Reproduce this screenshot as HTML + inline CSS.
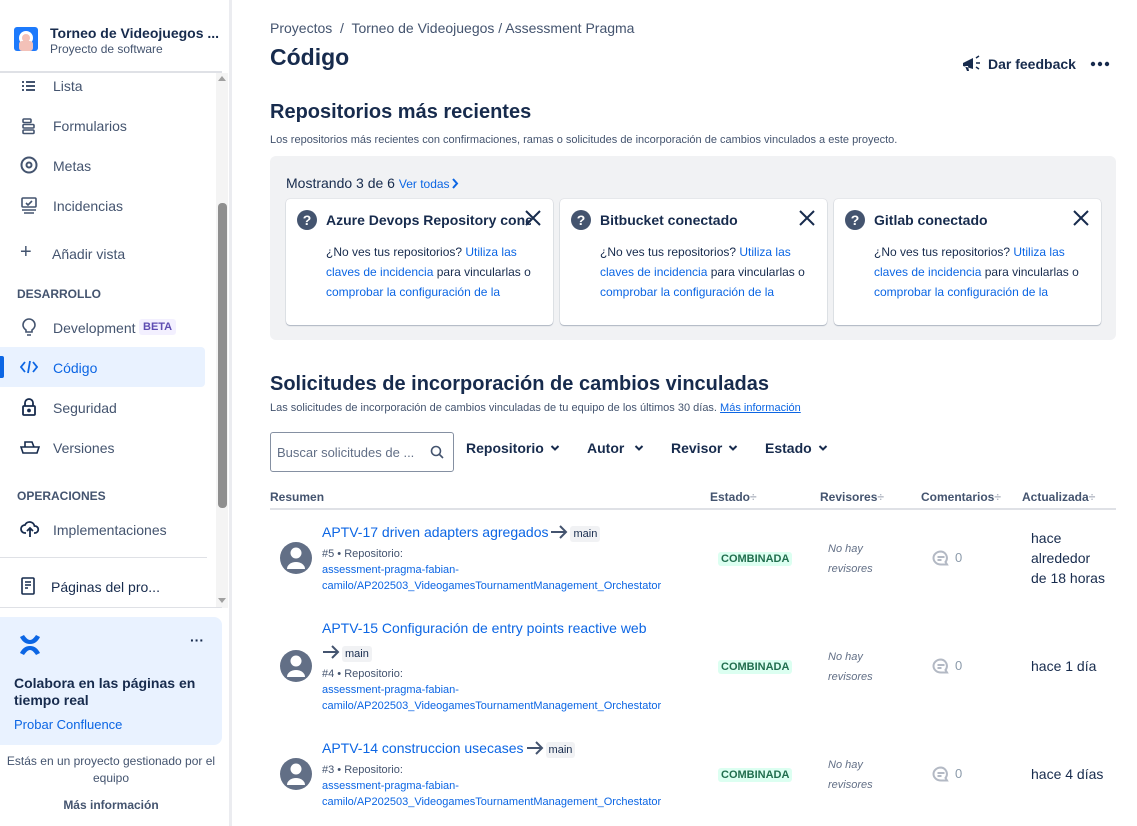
<!DOCTYPE html>
<html><head><meta charset="utf-8">
<style>
*{box-sizing:border-box;margin:0;padding:0}
body{width:1137px;height:826px;overflow:hidden;background:#fff;font-family:"Liberation Sans",sans-serif;color:#172b4d;position:relative}
.a{position:absolute;white-space:nowrap}
.nav{font-size:14px;color:#44546f}
.ic{position:absolute;left:20px}
.link{color:#0c66e4}
.card{position:absolute;top:199px;width:267px;height:126px;background:#fff;border-radius:4px;box-shadow:0 1px 1px rgba(9,30,66,.25),0 0 1px rgba(9,30,66,.31)}
.card .q{position:absolute;left:11px;top:11px}
.card .t{position:absolute;left:40px;top:13px;font-size:14px;font-weight:bold;color:#172b4d;white-space:nowrap;overflow:hidden;width:205px}
.card .x{position:absolute;right:12px;top:11px}
.card .b{position:absolute;left:40px;top:43px;font-size:12px;line-height:20px;color:#172b4d;width:215px}
.th{font-size:12px;font-weight:bold;color:#44546f}
.pt{font-size:14px;color:#0c66e4}
.meta{font-size:11px;color:#44546f;line-height:16px}
.repo{font-size:11px;color:#0c66e4;line-height:16px}
.main{background:#f1f2f4;border-radius:3px;font-size:11px;padding:2px 3px;color:#172b4d}
.badge{font-size:11px;font-weight:bold;color:#216e4e;background:#dcfff1;padding:1px 3px;border-radius:3px}
.rev{font-size:11px;font-style:italic;color:#626f86;line-height:20px}
.cm{font-size:13px;color:#8c9bab}
.upd{font-size:14px;color:#172b4d;line-height:20px}
.arr{vertical-align:-3px;margin:0 2px}
.chev{position:absolute}
</style></head><body>

<div class="a" style="left:0;top:0;width:229px;height:826px;background:#fff"></div>
<div class="a" style="left:229px;top:0;width:3px;height:826px;background:#ebecf0"></div>
<svg class="a" style="left:14px;top:27px" width="24" height="24"><rect width="24" height="24" rx="3" fill="#1d7afc"/><circle cx="12" cy="11" r="7" fill="#fff"/><rect x="5" y="14" width="14" height="10" rx="3" fill="#f3c1b8"/><circle cx="12" cy="11" r="4" fill="#f3c1b8"/></svg>
<div class="a" style="left:50px;top:25px;font-size:14px;font-weight:bold">Torneo de Videojuegos ...</div>
<div class="a" style="left:50px;top:42px;font-size:12px;color:#44546f">Proyecto de software</div>
<div class="a" style="left:0;top:71px;width:222px;height:2px;background:#dfe1e6"></div>
<div class="a" style="left:216px;top:73px;width:12px;height:535px;background:#f4f4f4"></div>
<div class="a" style="left:218px;top:203px;width:9px;height:305px;background:#8f8f8f;border-radius:4px"></div>
<div class="a" style="left:218px;top:76px;width:0;height:0;border-left:4px solid transparent;border-right:4px solid transparent;border-bottom:5px solid #a0a0a0"></div>
<div class="a" style="left:218px;top:598px;width:0;height:0;border-left:4px solid transparent;border-right:4px solid transparent;border-top:5px solid #a0a0a0"></div>

<svg class="ic" style="top:78px" width="16" height="16" fill="#44546f"><rect x="2" y="3" width="2" height="2"/><rect x="6" y="3" width="9" height="2"/><rect x="2" y="7" width="2" height="2"/><rect x="6" y="7" width="9" height="2"/><rect x="2" y="11" width="2" height="2"/><rect x="6" y="11" width="9" height="2"/></svg>
<div class="a nav" style="left:53px;top:78px">Lista</div>
<svg class="ic" style="top:117px" width="18" height="18" fill="none" stroke="#44546f" stroke-width="1.6"><rect x="3" y="2" width="8" height="3.5" rx="1"/><rect x="3" y="7.5" width="11" height="3.5" rx="1"/><rect x="3" y="13" width="11" height="3.5" rx="1"/></svg>
<div class="a nav" style="left:53px;top:118px">Formularios</div>
<svg class="ic" style="top:156px" width="18" height="18" fill="none" stroke="#44546f" stroke-width="2"><circle cx="9" cy="9" r="7.5"/><circle cx="9" cy="9" r="2.5"/></svg>
<div class="a nav" style="left:53px;top:158px">Metas</div>
<svg class="ic" style="top:196px" width="18" height="18" fill="none" stroke="#44546f" stroke-width="1.6"><rect x="2" y="2" width="14" height="9" rx="1"/><path d="M6 7l2 2 4-4M2 14h14M4 17h10"/></svg>
<div class="a nav" style="left:53px;top:198px">Incidencias</div>
<div class="a" style="left:20px;top:241px;font-size:20px;color:#44546f">+</div>
<div class="a nav" style="left:52px;top:246px">Añadir vista</div>
<div class="a" style="left:17px;top:287px;font-size:12px;font-weight:bold;color:#44546f">DESARROLLO</div>
<svg class="ic" style="top:318px" width="18" height="18" fill="none" stroke="#44546f" stroke-width="1.6"><path d="M6 12c-2-1.5-3-3-3-5a6 6 0 0112 0c0 2-1 3.5-3 5v2H6z M7 17h4"/></svg>
<div class="a nav" style="left:53px;top:320px">Development</div>
<div class="a" style="left:139px;top:319px;font-size:11px;font-weight:bold;color:#5e4db2;background:#f3f0ff;padding:2px 4px;border-radius:3px">BETA</div>
<div class="a" style="left:0;top:347px;width:205px;height:40px;background:#e9f2ff;border-radius:0 4px 4px 0"></div>
<div class="a" style="left:0;top:356px;width:4px;height:22px;background:#0c66e4;border-radius:0 2px 2px 0"></div>
<svg class="ic" style="top:359px" width="18" height="16" fill="none" stroke="#0c66e4" stroke-width="1.8"><path d="M5 3L1 8l4 5M13 3l4 5-4 5M10 2L8 14"/></svg>
<div class="a nav" style="left:53px;top:360px;color:#0c66e4">Código</div>
<svg class="ic" style="top:397px" width="18" height="20" fill="none" stroke="#172b4d" stroke-width="1.8"><path d="M5 9V6a4 4 0 018 0v3"/><rect x="3" y="9" width="12" height="9" rx="1"/><circle cx="9" cy="13.5" r="1" fill="#172b4d"/></svg>
<div class="a nav" style="left:53px;top:400px">Seguridad</div>
<svg class="ic" style="top:440px" width="20" height="16" fill="none" stroke="#172b4d" stroke-width="1.6"><path d="M5 7V2h7l2 5M1 7h18l-2 6H3z"/></svg>
<div class="a nav" style="left:53px;top:440px">Versiones</div>
<div class="a" style="left:17px;top:489px;font-size:12px;font-weight:bold;color:#44546f">OPERACIONES</div>
<svg class="ic" style="top:519px" width="20" height="20" fill="none" stroke="#172b4d" stroke-width="1.8"><path d="M6 14H5a4 4 0 010-8 5 5 0 019.5 1A3.5 3.5 0 0115 14h-1M10 18v-8M7 12l3-3 3 3"/></svg>
<div class="a nav" style="left:53px;top:522px">Implementaciones</div>
<div class="a" style="left:0;top:557px;width:207px;height:1px;background:#dfe1e6"></div>
<svg class="ic" style="top:576px" width="16" height="20" fill="none" stroke="#172b4d" stroke-width="1.6"><rect x="2" y="2" width="12" height="16" rx="1"/><path d="M5 6h6M5 9h6M5 12h3"/></svg>
<div class="a nav" style="left:51px;top:579px;color:#172b4d">Páginas del pro...</div>
<div class="a" style="left:0;top:607px;width:222px;height:1px;background:#dfe1e6"></div>
<div class="a" style="left:0;top:617px;width:222px;height:128px;background:#e9f2ff;border-radius:0 8px 8px 0"></div>
<svg class="a" style="left:18px;top:633px" width="24" height="24" fill="#0c66e4"><path d="M2 4l4-2c2 3 4 5 6 5s4-2 6-5l4 2c-2 4-5 7-10 7S4 8 2 4z M2 20l4 2c2-3 4-5 6-5s4 2 6 5l4-2c-2-4-5-7-10-7S4 16 2 20z"/></svg>
<div class="a" style="left:190px;top:632px;font-size:14px;font-weight:bold;color:#172b4d">···</div>
<div class="a" style="left:14px;top:675px;font-size:14px;font-weight:bold;line-height:17px;white-space:normal;width:190px">Colabora en las páginas en tiempo real</div>
<div class="a" style="left:14px;top:717px;font-size:13px;color:#0c66e4">Probar Confluence</div>
<div class="a" style="left:0;top:753px;width:222px;text-align:center;font-size:12px;color:#44546f;line-height:17px;white-space:normal">Estás en un proyecto gestionado por el equipo</div>
<div class="a" style="left:0;top:798px;width:222px;text-align:center;font-size:12px;font-weight:bold;color:#44546f">Más información</div>

<div class="a" style="left:270px;top:20px;font-size:14px;color:#44546f">Proyectos &nbsp;/&nbsp; Torneo de Videojuegos / Assessment Pragma</div>
<div class="a" style="left:270px;top:44px;font-size:23px;font-weight:bold">Código</div>
<svg class="a" style="left:962px;top:55px" width="20" height="18" fill="#172b4d"><path d="M1 8l10-5v11L1 11z M3 11l2 5h2l-1-5z"/><path d="M14 3l3-2M14 8h4M14 12l3 2" stroke="#172b4d" stroke-width="1.5"/></svg>
<div class="a" style="left:988px;top:56px;font-size:14px;font-weight:bold">Dar feedback</div>
<svg class="a" style="left:1090px;top:61px" width="20" height="6" fill="#172b4d"><circle cx="3" cy="3" r="2.2"/><circle cx="10" cy="3" r="2.2"/><circle cx="17" cy="3" r="2.2"/></svg>

<div class="a" style="left:270px;top:101px;font-size:20px;font-weight:bold">Repositorios más recientes</div>
<div class="a" style="left:270px;top:134px;font-size:11px;color:#44546f">Los repositorios más recientes con confirmaciones, ramas o solicitudes de incorporación de cambios vinculados a este proyecto.</div>
<div class="a" style="left:270px;top:156px;width:846px;height:184px;background:#f1f2f4;border-radius:6px"></div>
<div class="a" style="left:286px;top:175px;font-size:14px">Mostrando 3 de 6 <span style="font-size:12px;color:#0c66e4">Ver todas</span></div>
<svg class="a" style="left:451px;top:178px" width="8" height="11" fill="none" stroke="#0c66e4" stroke-width="2"><path d="M2 1l4 4.5L2 10"/></svg>

<div class="card" style="left:286px">
<svg class="q" width="20" height="20"><circle cx="10" cy="10" r="10" fill="#44546f"/><text x="10" y="15" text-anchor="middle" fill="#fff" font-size="14" font-weight="bold" font-family="Liberation Sans">?</text></svg>
<div class="t">Azure Devops Repository conec</div>
<svg class="x" width="16" height="16" stroke="#172b4d" stroke-width="2"><path d="M1 1l14 14M15 1L1 15"/></svg>
<div class="b">¿No ves tus repositorios? <span class="link">Utiliza las claves de incidencia</span> para vincularlas o <span class="link">comprobar la configuración de la</span></div>
</div>
<div class="card" style="left:560px">
<svg class="q" width="20" height="20"><circle cx="10" cy="10" r="10" fill="#44546f"/><text x="10" y="15" text-anchor="middle" fill="#fff" font-size="14" font-weight="bold" font-family="Liberation Sans">?</text></svg>
<div class="t">Bitbucket conectado</div>
<svg class="x" width="16" height="16" stroke="#172b4d" stroke-width="2"><path d="M1 1l14 14M15 1L1 15"/></svg>
<div class="b">¿No ves tus repositorios? <span class="link">Utiliza las claves de incidencia</span> para vincularlas o <span class="link">comprobar la configuración de la</span></div>
</div>
<div class="card" style="left:834px">
<svg class="q" width="20" height="20"><circle cx="10" cy="10" r="10" fill="#44546f"/><text x="10" y="15" text-anchor="middle" fill="#fff" font-size="14" font-weight="bold" font-family="Liberation Sans">?</text></svg>
<div class="t">Gitlab conectado</div>
<svg class="x" width="16" height="16" stroke="#172b4d" stroke-width="2"><path d="M1 1l14 14M15 1L1 15"/></svg>
<div class="b">¿No ves tus repositorios? <span class="link">Utiliza las claves de incidencia</span> para vincularlas o <span class="link">comprobar la configuración de la</span></div>
</div>

<div class="a" style="left:270px;top:373px;font-size:20px;font-weight:bold">Solicitudes de incorporación de cambios vinculadas</div>
<div class="a" style="left:270px;top:402px;font-size:11px;color:#44546f">Las solicitudes de incorporación de cambios vinculadas de tu equipo de los últimos 30 días. <span style="color:#0c66e4;text-decoration:underline">Más información</span></div>

<div class="a" style="left:270px;top:432px;width:184px;height:40px;border:1px solid #8590a2;border-radius:3px"></div>
<div class="a" style="left:277px;top:445px;font-size:13px;color:#626f86">Buscar solicitudes de ...</div>
<svg class="a" style="left:430px;top:445px" width="14" height="14" fill="none" stroke="#44546f" stroke-width="1.6"><circle cx="6" cy="6" r="4.5"/><path d="M9.5 9.5L13 13"/></svg>
<div class="a" style="left:466px;top:440px;font-size:14px;font-weight:bold">Repositorio</div>
<svg class="chev" style="left:550px;top:444px" width="10" height="8" fill="none" stroke="#172b4d" stroke-width="2"><path d="M1.5 2l3.5 3.5L8.5 2"/></svg>
<div class="a" style="left:587px;top:440px;font-size:14px;font-weight:bold">Autor</div>
<svg class="chev" style="left:634px;top:444px" width="10" height="8" fill="none" stroke="#172b4d" stroke-width="2"><path d="M1.5 2l3.5 3.5L8.5 2"/></svg>
<div class="a" style="left:671px;top:440px;font-size:14px;font-weight:bold">Revisor</div>
<svg class="chev" style="left:728px;top:444px" width="10" height="8" fill="none" stroke="#172b4d" stroke-width="2"><path d="M1.5 2l3.5 3.5L8.5 2"/></svg>
<div class="a" style="left:765px;top:440px;font-size:14px;font-weight:bold">Estado</div>
<svg class="chev" style="left:818px;top:444px" width="10" height="8" fill="none" stroke="#172b4d" stroke-width="2"><path d="M1.5 2l3.5 3.5L8.5 2"/></svg>

<div class="a th" style="left:270px;top:490px">Resumen</div>
<div class="a th" style="left:710px;top:490px">Estado<span style="color:#b3b9c4">÷</span></div>
<div class="a th" style="left:820px;top:490px">Revisores<span style="color:#b3b9c4">÷</span></div>
<div class="a th" style="left:921px;top:490px">Comentarios<span style="color:#b3b9c4">÷</span></div>
<div class="a th" style="left:1022px;top:490px">Actualizada<span style="color:#b3b9c4">÷</span></div>
<div class="a" style="left:270px;top:508px;width:846px;height:2px;background:#dfe1e6"></div>

<svg class="a" style="left:280px;top:542px" width="32" height="32"><circle cx="16" cy="16" r="16" fill="#626f86"/><circle cx="16" cy="11" r="5.5" fill="#fff"/><path d="M7 27a9 7 0 0118 0z" fill="#fff"/></svg>
<div class="a pt" style="left:322px;top:524px">APTV-17 driven adapters agregados<svg class="arr" width="18" height="16" fill="none" stroke="#44546f" stroke-width="2"><path d="M1 8h15M10 2l6 6-6 6"/></svg><span class="main">main</span></div>
<div class="a meta" style="left:322px;top:546px">#5 • Repositorio:</div>
<div class="a repo" style="left:322px;top:562px">assessment-pragma-fabian-<br>camilo/AP202503_VideogamesTournamentManagement_Orchestator</div>
<div class="a badge" style="left:718px;top:552px">COMBINADA</div>
<div class="a rev" style="left:828px;top:539px">No hay<br>revisores</div>
<svg class="a" style="left:932px;top:550px" width="18" height="17" fill="none" stroke="#b3b9c4" stroke-width="2"><path d="M9 1.5a7.5 6.5 0 100 13h6l-1.5-2.5A6.5 6.5 0 009 1.5z"/><path d="M5.5 7h7M5.5 10h4"/></svg>
<div class="a cm" style="left:955px;top:550px">0</div>
<div class="a upd" style="left:1031px;top:528px">hace<br>alrededor<br>de 18 horas</div>

<svg class="a" style="left:280px;top:650px" width="32" height="32"><circle cx="16" cy="16" r="16" fill="#626f86"/><circle cx="16" cy="11" r="5.5" fill="#fff"/><path d="M7 27a9 7 0 0118 0z" fill="#fff"/></svg>
<div class="a pt" style="left:322px;top:620px">APTV-15 Configuración de entry points reactive web</div>
<div class="a pt" style="left:320px;top:644px"><svg class="arr" width="18" height="16" fill="none" stroke="#44546f" stroke-width="2"><path d="M1 8h15M10 2l6 6-6 6"/></svg><span class="main">main</span></div>
<div class="a meta" style="left:322px;top:666px">#4 • Repositorio:</div>
<div class="a repo" style="left:322px;top:682px">assessment-pragma-fabian-<br>camilo/AP202503_VideogamesTournamentManagement_Orchestator</div>
<div class="a badge" style="left:718px;top:660px">COMBINADA</div>
<div class="a rev" style="left:828px;top:647px">No hay<br>revisores</div>
<svg class="a" style="left:932px;top:658px" width="18" height="17" fill="none" stroke="#b3b9c4" stroke-width="2"><path d="M9 1.5a7.5 6.5 0 100 13h6l-1.5-2.5A6.5 6.5 0 009 1.5z"/><path d="M5.5 7h7M5.5 10h4"/></svg>
<div class="a cm" style="left:955px;top:658px">0</div>
<div class="a upd" style="left:1031px;top:656px">hace 1 día</div>

<svg class="a" style="left:280px;top:758px" width="32" height="32"><circle cx="16" cy="16" r="16" fill="#626f86"/><circle cx="16" cy="11" r="5.5" fill="#fff"/><path d="M7 27a9 7 0 0118 0z" fill="#fff"/></svg>
<div class="a pt" style="left:322px;top:740px">APTV-14 construccion usecases<svg class="arr" width="18" height="16" fill="none" stroke="#44546f" stroke-width="2"><path d="M1 8h15M10 2l6 6-6 6"/></svg><span class="main">main</span></div>
<div class="a meta" style="left:322px;top:762px">#3 • Repositorio:</div>
<div class="a repo" style="left:322px;top:778px">assessment-pragma-fabian-<br>camilo/AP202503_VideogamesTournamentManagement_Orchestator</div>
<div class="a badge" style="left:718px;top:768px">COMBINADA</div>
<div class="a rev" style="left:828px;top:755px">No hay<br>revisores</div>
<svg class="a" style="left:932px;top:766px" width="18" height="17" fill="none" stroke="#b3b9c4" stroke-width="2"><path d="M9 1.5a7.5 6.5 0 100 13h6l-1.5-2.5A6.5 6.5 0 009 1.5z"/><path d="M5.5 7h7M5.5 10h4"/></svg>
<div class="a cm" style="left:955px;top:766px">0</div>
<div class="a upd" style="left:1031px;top:764px">hace 4 días</div>
</body></html>
